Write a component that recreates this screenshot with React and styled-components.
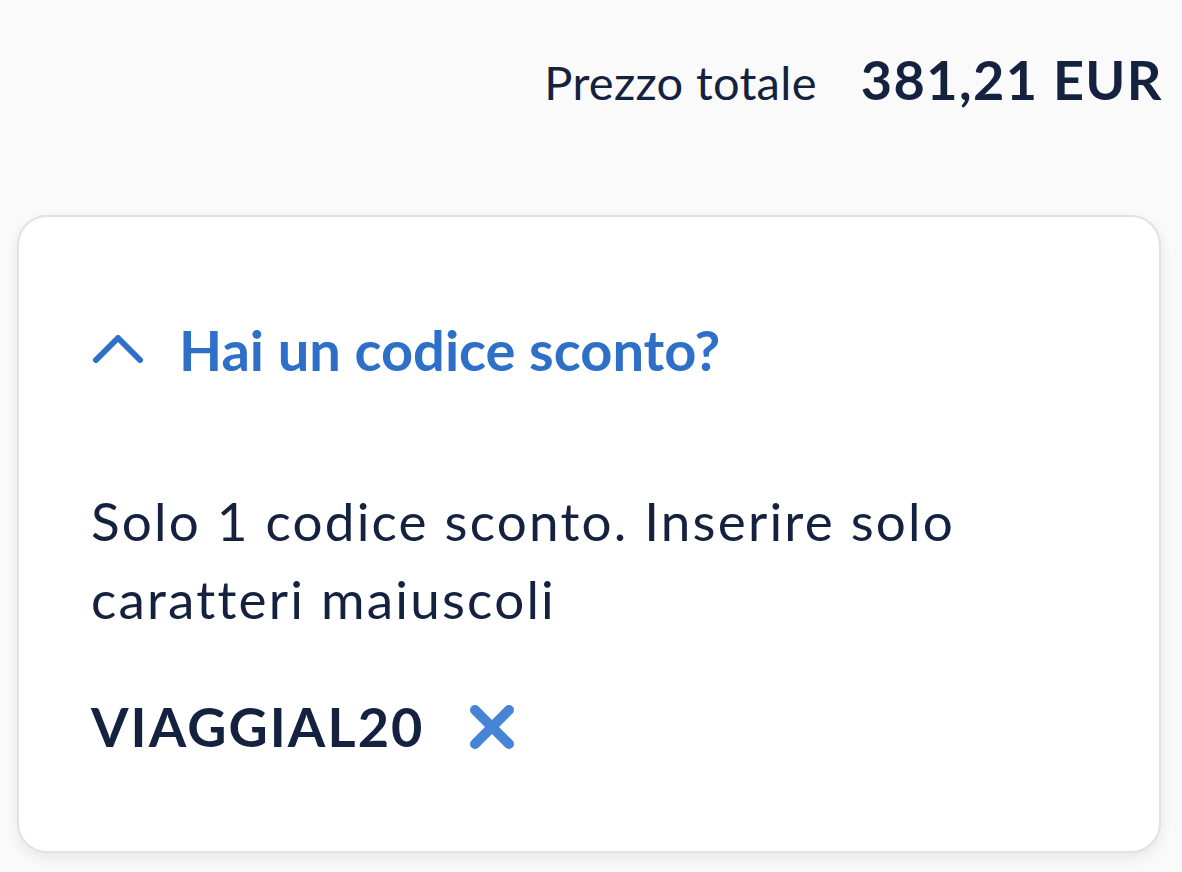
import React from "react";
import styled, { createGlobalStyle } from "styled-components";

const GlobalStyle = createGlobalStyle`
  html, body {
    margin: 0;
    padding: 0;
    background: #fafafa;
    font-family: Lato, "Noto Sans", sans-serif;
    color: #14223f;
  }
`;

const Page = styled.div`
  width: 1182px;
  height: 872px;
  overflow: hidden;
  background: #fafafa;
`;

const TotalRow = styled.div`
  display: flex;
  justify-content: flex-end;
  align-items: baseline;
  gap: 44px;
  padding: 48px 19px 0 0;
`;

const TotalLabel = styled.span`
  font-size: 47px;
  line-height: 1.2;
  font-weight: 400;
  letter-spacing: 0.3px;
`;

const TotalValue = styled.span`
  font-size: 54px;
  line-height: 1.2;
  font-weight: 700;
  letter-spacing: 1.4px;
`;

const Card = styled.section`
  margin: 102px 21px 0 17px;
  background: #fff;
  border: 2px solid #e2e2e2;
  border-radius: 30px;
  box-shadow: 0 5px 14px rgba(0, 0, 0, 0.08);
  padding: 99px 72px 91px;
`;

const Toggle = styled.button`
  display: flex;
  align-items: center;
  gap: 36px;
  padding: 0;
  border: 0;
  background: none;
  color: #2e6fc8;
  font-family: inherit;
  font-size: 56px;
  line-height: 1.2;
  font-weight: 700;
  cursor: pointer;
  svg {
    margin-left: 2px;
  }
`;

const Hint = styled.p`
  margin: 99px 0 0;
  font-size: 53px;
  line-height: 78px;
  letter-spacing: 2.2px;
`;

const CodeRow = styled.div`
  display: flex;
  align-items: center;
  gap: 46px;
  margin-top: 57px;
`;

const Code = styled.span`
  font-size: 54px;
  line-height: 1.2;
  font-weight: 700;
  letter-spacing: 2.1px;
`;

const RemoveButton = styled.button`
  display: flex;
  padding: 0;
  border: 0;
  background: none;
  cursor: pointer;
`;

const ChevronUp = () => (
  <svg width="50" height="28" viewBox="0 0 50 28" fill="none">
    <path d="M3 25 L25 3 L47 25" stroke="#2e6fc8" strokeWidth="6" strokeLinecap="round" strokeLinejoin="round" />
  </svg>
);

const CloseIcon = () => (
  <svg width="44" height="44" viewBox="0 0 44 44" fill="none">
    <path d="M5 5 L39 39 M39 5 L5 39" stroke="#4684d5" strokeWidth="10" strokeLinecap="round" />
  </svg>
);

export default function App() {
  return (
    <Page>
      <GlobalStyle />
      <TotalRow>
        <TotalLabel>Prezzo totale</TotalLabel>
        <TotalValue>381,21 EUR</TotalValue>
      </TotalRow>
      <Card>
        <Toggle>
          <ChevronUp />
          Hai un codice sconto?
        </Toggle>
        <Hint>
          Solo 1 codice sconto. Inserire solo
          <br />
          caratteri maiuscoli
        </Hint>
        <CodeRow>
          <Code>VIAGGIAL20</Code>
          <RemoveButton aria-label="Rimuovi codice">
            <CloseIcon />
          </RemoveButton>
        </CodeRow>
      </Card>
    </Page>
  );
}
